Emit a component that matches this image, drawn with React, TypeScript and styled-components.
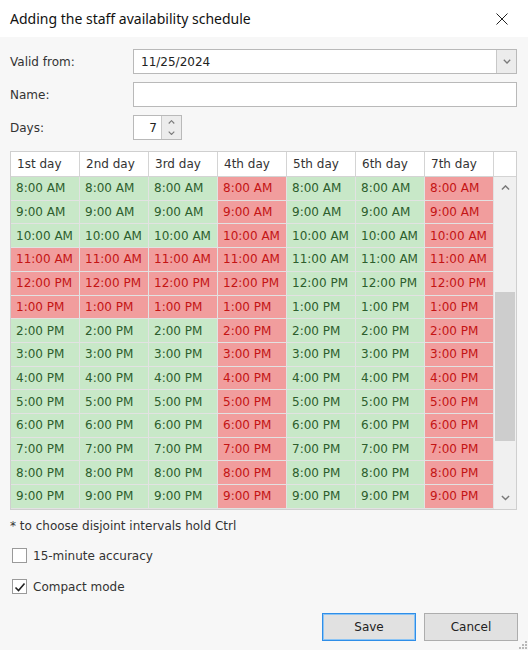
import * as React from 'react'
import styled, { createGlobalStyle } from 'styled-components'

const GlobalStyle = createGlobalStyle`
  html, body {
    margin: 0;
    padding: 0;
    background: #f7f7f7;
  }
  * {
    box-sizing: border-box;
  }
`

const days = ['1st day', '2nd day', '3rd day', '4th day', '5th day', '6th day', '7th day']
const hours = [
  '8:00 AM', '9:00 AM', '10:00 AM', '11:00 AM', '12:00 PM', '1:00 PM', '2:00 PM',
  '3:00 PM', '4:00 PM', '5:00 PM', '6:00 PM', '7:00 PM', '8:00 PM', '9:00 PM',
]

// busy = red cells, by [hour index] -> set of day indexes
const isBusy = (row: number, col: number) => {
  if (col === 3 || col === 6) return true
  if (row >= 3 && row <= 5 && col <= 2) return true
  return false
}

function Chevron({ up, size = 8 }: { up?: boolean; size?: number }) {
  return (
    <svg width={size} height={size * 0.6} viewBox="0 0 10 6">
      <path
        d={up ? 'M1 5 L5 1 L9 5' : 'M1 1 L5 5 L9 1'}
        fill="none"
        stroke="#7a7a7a"
        strokeWidth="1.6"
      />
    </svg>
  )
}

function App() {
  return (
    <Window>
      <GlobalStyle />
      <TitleBar>
        <Title>Adding the staff availability schedule</Title>
        <CloseButton>
          <svg width="12" height="12" viewBox="0 0 12 12">
            <path d="M0.5 0.5 L11.5 11.5 M11.5 0.5 L0.5 11.5" stroke="#222" strokeWidth="1" />
          </svg>
        </CloseButton>
      </TitleBar>

      <Body>
        <Form>
          <Label>Valid from:</Label>
          <Combo>
            <ComboText>11/25/2024</ComboText>
            <ComboButton>
              <Chevron />
            </ComboButton>
          </Combo>

          <Label>Name:</Label>
          <TextBox />

          <Label>Days:</Label>
          <Spinner>
            <SpinValue>7</SpinValue>
            <SpinButtons>
              <SpinHalf>
                <Chevron up size={7} />
              </SpinHalf>
              <SpinHalf>
                <Chevron size={7} />
              </SpinHalf>
            </SpinButtons>
          </Spinner>
        </Form>

        <Schedule>
          {days.map((d) => (
            <HeaderCell key={d}>{d}</HeaderCell>
          ))}
          <HeaderCell />
          {hours.map((h, r) =>
            days.map((d, c) => (
              <SlotCell key={d + h} $busy={isBusy(r, c)}>
                {h}
              </SlotCell>
            ))
          )}
          <ScrollBar>
            <ScrollArrow>
              <Chevron up size={9} />
            </ScrollArrow>
            <ScrollTrack>
              <ScrollThumb />
            </ScrollTrack>
            <ScrollArrow>
              <Chevron size={9} />
            </ScrollArrow>
          </ScrollBar>
        </Schedule>

        <Note>* to choose disjoint intervals hold Ctrl</Note>

        <CheckRow $top={14}>
          <CheckBox />
          <CheckLabel>15-minute accuracy</CheckLabel>
        </CheckRow>
        <CheckRow $top={15}>
          <CheckBox>
            <svg width="12" height="12" viewBox="0 0 12 12">
              <path d="M1.5 6.5 L4.5 9.5 L10.5 2.5" fill="none" stroke="#222" strokeWidth="1.6" />
            </svg>
          </CheckBox>
          <CheckLabel>Compact mode</CheckLabel>
        </CheckRow>

        <Buttons>
          <Button $primary>Save</Button>
          <Button>Cancel</Button>
        </Buttons>
      </Body>

      <Grip>
        <svg width="8" height="8" viewBox="0 0 8 8">
          <rect x="6" y="0" width="2" height="2" fill="#b8b8b8" />
          <rect x="3" y="3" width="2" height="2" fill="#b8b8b8" />
          <rect x="6" y="3" width="2" height="2" fill="#b8b8b8" />
          <rect x="0" y="6" width="2" height="2" fill="#b8b8b8" />
          <rect x="3" y="6" width="2" height="2" fill="#b8b8b8" />
          <rect x="6" y="6" width="2" height="2" fill="#b8b8b8" />
        </svg>
      </Grip>
    </Window>
  )
}

const Window = styled.div`
  position: relative;
  width: 528px;
  height: 650px;
  background: #f7f7f7;
  display: flex;
  flex-direction: column;
  font-family: 'DejaVu Sans', Verdana, sans-serif;
  font-size: 12px;
  color: #333;
  overflow: hidden;
`

const TitleBar = styled.div`
  height: 37px;
  background: #fff;
  display: flex;
  align-items: center;
  justify-content: space-between;
  padding: 0 20px 0 10px;
`

const Title = styled.div`
  font-family: 'Noto Sans', 'Open Sans', sans-serif;
  font-size: 14px;
  color: #111;
  margin-top: -1px;
`

const CloseButton = styled.div`
  display: flex;
  align-items: center;
  margin-top: 1px;
`

const Body = styled.div`
  flex: 1;
  display: flex;
  flex-direction: column;
  padding: 12px 11px 0 10px;
`

const Form = styled.div`
  display: grid;
  grid-template-columns: 123px 1fr;
  grid-auto-rows: 25px;
  row-gap: 8px;
  align-items: center;
`

const Label = styled.div`
  color: #333;
  margin-top: 1px;
`

const Combo = styled.div`
  height: 25px;
  display: flex;
  border: 1px solid #b9b9b9;
  background: #fff;
`

const ComboText = styled.div`
  flex: 1;
  padding-left: 7px;
  display: flex;
  align-items: center;
  color: #222;
`

const ComboButton = styled.div`
  width: 20px;
  background: #ececec;
  border-left: 1px solid #c8c8c8;
  display: flex;
  align-items: center;
  justify-content: center;
`

const TextBox = styled.div`
  height: 25px;
  border: 1px solid #b9b9b9;
  background: #fff;
`

const Spinner = styled.div`
  width: 49px;
  height: 25px;
  display: flex;
  border: 1px solid #b9b9b9;
  background: #fff;
`

const SpinValue = styled.div`
  flex: 1;
  display: flex;
  align-items: center;
  justify-content: flex-end;
  padding-right: 4px;
  color: #222;
`

const SpinButtons = styled.div`
  width: 20px;
  display: flex;
  flex-direction: column;
  background: #ececec;
  border-left: 1px solid #c8c8c8;
`

const SpinHalf = styled.div`
  flex: 1;
  display: flex;
  align-items: center;
  justify-content: center;
`

const Schedule = styled.div`
  margin-top: 11px;
  display: grid;
  grid-template-columns: repeat(7, 69px) 22px;
  grid-template-rows: 25px repeat(14, 23.71px);
  border: 1px solid #cfcfcf;
  background: #fff;
`

const HeaderCell = styled.div`
  background: #fff;
  border-right: 1px solid #d4d4d4;
  border-bottom: 1px solid #d4d4d4;
  display: flex;
  align-items: center;
  padding-left: 6px;
  color: #333;
  &:nth-child(8) {
    border-right: none;
  }
`

const SlotCell = styled.div<{ $busy: boolean }>`
  background: ${(p) => (p.$busy ? '#f19d9d' : '#c8e8c8')};
  color: ${(p) => (p.$busy ? '#c41414' : '#2d5e2d')};
  border-right: 1px solid #e2e2e2;
  border-bottom: 1px solid #e2e2e2;
  display: flex;
  align-items: center;
  padding-left: 5px;
  white-space: nowrap;
  overflow: hidden;
`

const ScrollBar = styled.div`
  grid-column: 8;
  grid-row: 2 / span 14;
  background: #f0f0f0;
  display: flex;
  flex-direction: column;
`

const ScrollArrow = styled.div`
  height: 22px;
  display: flex;
  align-items: center;
  justify-content: center;
`

const ScrollTrack = styled.div`
  flex: 1;
  padding: 93px 1px 0 1px;
`

const ScrollThumb = styled.div`
  height: 149px;
  background: #cdcdcd;
`

const Note = styled.div`
  margin-top: 8px;
  line-height: 16px;
  color: #333;
`

const CheckRow = styled.div<{ $top: number }>`
  margin-top: ${(p) => p.$top}px;
  display: flex;
  align-items: center;
  gap: 6px;
  padding-left: 2px;
  height: 16px;
`

const CheckBox = styled.div`
  width: 15px;
  height: 15px;
  border: 1px solid #9a9a9a;
  background: #fff;
  display: flex;
  align-items: center;
  justify-content: center;
`

const CheckLabel = styled.div`
  color: #333;
`

const Buttons = styled.div`
  margin-top: 18px;
  display: flex;
  justify-content: flex-end;
  gap: 8px;
  margin-right: -1px;
`

const Button = styled.div<{ $primary?: boolean }>`
  width: 94px;
  height: 28px;
  display: flex;
  align-items: center;
  justify-content: center;
  background: #e1e1e1;
  color: #222;
  border: 1px solid ${(p) => (p.$primary ? '#2f8ee8' : '#adadad')};
  box-shadow: ${(p) => (p.$primary ? 'inset 0 0 0 1px #8cc4f4' : 'none')};
`

const Grip = styled.div`
  position: absolute;
  right: 1px;
  bottom: 1px;
  display: flex;
`

export default App
